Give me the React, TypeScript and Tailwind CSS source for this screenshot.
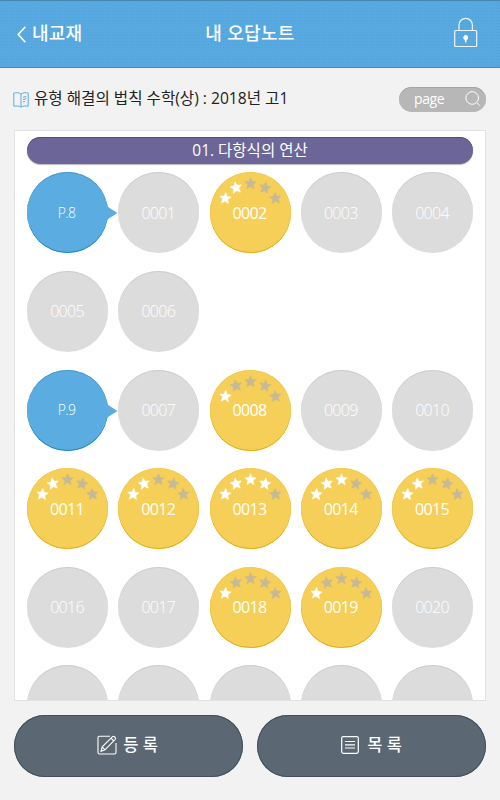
import React from 'react';

type Cell = { label: string; kind: 'page' | 'plain' | 'wrong'; stars?: number } | null;

const plain = (label: string): Cell => ({ label, kind: 'plain' });
const wrong = (label: string, stars: number): Cell => ({ label, kind: 'wrong', stars });
const page = (label: string): Cell => ({ label, kind: 'page' });

const ROWS: Cell[][] = [
  [page('P.8'), plain('0001'), wrong('0002', 2), plain('0003'), plain('0004')],
  [plain('0005'), plain('0006'), null, null, null],
  [page('P.9'), plain('0007'), wrong('0008', 1), plain('0009'), plain('0010')],
  [wrong('0011', 2), wrong('0012', 2), wrong('0013', 4), wrong('0014', 3), wrong('0015', 2)],
  [plain('0016'), plain('0017'), wrong('0018', 1), wrong('0019', 1), plain('0020')],
  [plain(''), plain(''), plain(''), plain(''), plain('')],
];

const STARS = [
  { x: 15.3, y: 26.3, r: 5 },
  { x: 26, y: 15.7, r: -10 },
  { x: 40.5, y: 11.6, r: 0 },
  { x: 55, y: 15.7, r: 10 },
  { x: 65.4, y: 26.3, r: -5 },
];

const STAR_PATH = 'M0 -6 L1.7 -2.2 L5.8 -1.9 L2.7 1 L3.7 5.2 L0 3 L-3.7 5.2 L-2.7 1 L-5.8 -1.9 L-1.7 -2.2 Z';

function StarArc({ count }: { count: number }) {
  return (
    <svg className="absolute inset-0" width="81" height="81" viewBox="0 0 81 81">
      {STARS.map((s, i) => (
        <path
          key={i}
          d={STAR_PATH}
          fill={i < count ? '#ffffff' : '#c5b996'}
          stroke={i < count ? '#ffffff' : '#c5b996'}
          strokeWidth="0.4"
          transform={`translate(${s.x} ${s.y}) rotate(${s.r})`}
        />
      ))}
    </svg>
  );
}

function Bubble({ cell }: { cell: Cell }) {
  if (!cell) return <div className="size-[81px]" />;
  if (cell.kind === 'page') {
    return (
      <div className="relative flex size-[81px] items-center justify-center rounded-full bg-[#5aace1] text-[14px] tracking-[-0.6px] text-white shadow-[inset_0_-1px_0_#1c86c4,inset_0_1px_0_#479bd3]">
        <span className="-mt-px -ml-[2px] font-light">{cell.label}</span>
        <svg className="absolute top-[33px] left-[78px]" width="13" height="16" viewBox="0 0 13 16">
          <path d="M0 0 L12.5 8 L0 16 Z" fill="#5aace1" />
        </svg>
      </div>
    );
  }
  if (cell.kind === 'wrong') {
    return (
      <div className="relative flex size-[81px] items-center justify-center rounded-full bg-[#f5cf57] text-[16px] tracking-[-0.7px] text-white shadow-[inset_0_-1px_0_#e2b01e,inset_0_0_0_0.5px_#efc648]">
        <StarArc count={cell.stars ?? 0} />
        <span className="-ml-px">{cell.label}</span>
      </div>
    );
  }
  return (
    <div className="flex size-[81px] items-center justify-center rounded-full bg-[#dcdcdc] text-[16px] font-light tracking-[-0.7px] text-white shadow-[inset_0_1px_0_#cdcdcd]">
      <span className="-ml-px">{cell.label}</span>
    </div>
  );
}

function Header() {
  return (
    <header className="grid h-[68px] grid-cols-3 items-center border-t border-b border-t-[#4685b0] border-b-[#2793d3] bg-[#57a9e0] bg-[radial-gradient(#50a2da_0.7px,transparent_0.9px)] bg-size-[3px_3px] text-[18px] font-medium text-white">
      <div className="flex items-center gap-1.5 pl-[17px]">
        <svg width="9" height="17" viewBox="0 0 9 17" fill="none" stroke="white" strokeWidth="1.6">
          <path d="M8.4 0.7 L1.2 8.5 L8.4 16.3" />
        </svg>
        <span className="-mt-0.5 tracking-[0.2px]">내교재</span>
      </div>
      <div className="-mt-0.5 text-center tracking-[0.3px]">내 오답노트</div>
      <div className="-mt-[3px] flex justify-end pr-[22px]">
        <svg width="25" height="31" viewBox="0 0 25 31" fill="none" stroke="#eef7fd" strokeWidth="1.2">
          <rect x="1.7" y="13.5" width="22" height="16" rx="1" />
          <path d="M6 13.2 V8 A6.7 6.7 0 0 1 19.4 8 V13.2" />
          <path d="M12.7 18 a2.5 2.5 0 0 1 1.1 4.7 L13.3 25.5 H12.1 L11.6 22.7 A2.5 2.5 0 0 1 12.7 18 Z" fill="white" stroke="none" />
        </svg>
      </div>
    </header>
  );
}

function BookBar() {
  return (
    <div className="flex h-[62px] items-center justify-between pr-3.5 pl-[13px]">
      <div className="flex items-center gap-[5px] text-[15.6px] text-[#222]">
        <svg className="mt-0.5" width="16" height="16" viewBox="0 0 16 16" fill="none" stroke="#5aaee2" strokeWidth="1">
          <path d="M8 2 C6 0.6 3.4 0.5 0.8 1 V14.2 C3.4 13.8 6 13.8 8 15.2 C10 13.8 12.6 13.8 15.2 14.2 V1 C12.6 0.5 10 0.6 8 2 Z M8 2 V15" />
          <path d="M10 5.3 L13.3 4.4 M10 7.6 L13.3 6.7 M10 9.9 L12 9.4" />
        </svg>
        <span>유형 해결의 법칙 수학(상) : 2018년 고1</span>
      </div>
      <div className="flex h-[25px] w-[87px] items-center justify-between rounded-full bg-[#b7b7b7] pr-[5px] pl-[15px] text-[14px] tracking-[-0.4px] text-white shadow-[inset_0_1px_0_#a5a5a5]">
        <span className="-mt-0.5">page</span>
        <svg width="16" height="16" viewBox="0 0 16 16" fill="none" stroke="white" strokeWidth="1">
          <circle cx="7.2" cy="7" r="6.3" />
          <path d="M11.6 11.4 L15 14.8" />
        </svg>
      </div>
    </div>
  );
}

function Footer() {
  const button =
    'flex h-[62px] flex-1 items-center justify-center rounded-[31px] bg-[#5b6772] text-[16.5px] font-medium text-white shadow-[inset_0_0_0_1px_#40505e]';
  return (
    <footer className="flex gap-3.5 px-3.5 pt-3.5">
      <button className={button}>
        <svg className="mr-[6px] -ml-0.5 -mt-0.5" width="20" height="20" viewBox="0 0 20 20" fill="none" stroke="white" strokeWidth="1.1">
          <path d="M13 1.2 H2.5 Q1 1.2 1 2.7 V17.5 Q1 19 2.5 19 H17.5 Q19 19 19 17.5 V8" />
          <path d="M4 16.3 L5.2 11.8 L15.5 1.7 Q16.5 0.8 17.8 2 Q19.2 3.3 18.2 4.4 L8 14.8 Z M14 3.2 L16.8 6 M5.2 11.8 L8 14.8" />
        </svg>
        <span className="-mt-0.5">등 록</span>
      </button>
      <button className={button}>
        <svg className="mr-[8px] -mt-0.5" width="18" height="18" viewBox="0 0 18 18" fill="none" stroke="white" strokeWidth="1.2">
          <rect x="0.7" y="0.7" width="16.6" height="16.6" rx="1.5" />
          <path d="M4 5.5 H14 M4 8.8 H14 M4 12 H14" />
        </svg>
        <span className="-mt-0.5">목 록</span>
      </button>
    </footer>
  );
}

export default function App() {
  return (
    <div className="h-[800px] w-[500px] overflow-hidden bg-[#f2f2f2] font-['Open_Sans','Noto_Sans_CJK_KR',sans-serif]">
      <Header />
      <BookBar />
      <main className="mx-3.5 h-[571px] overflow-hidden border border-[#e2e2e2] bg-white px-3 pt-1.5">
        <h2 className="flex h-[27px] items-center justify-center rounded-full bg-[#6b6697] text-[15.5px] text-white shadow-[inset_0_1px_0_#544b86,0_1px_1px_#bbb]">
          01. 다항식의 연산
        </h2>
        <div className="mt-[8.4px] flex flex-col gap-[17.6px]">
          {ROWS.map((row, i) => (
            <div key={i} className="flex justify-between">
              {row.map((cell, j) => (
                <Bubble key={j} cell={cell} />
              ))}
            </div>
          ))}
        </div>
      </main>
      <Footer />
    </div>
  );
}
